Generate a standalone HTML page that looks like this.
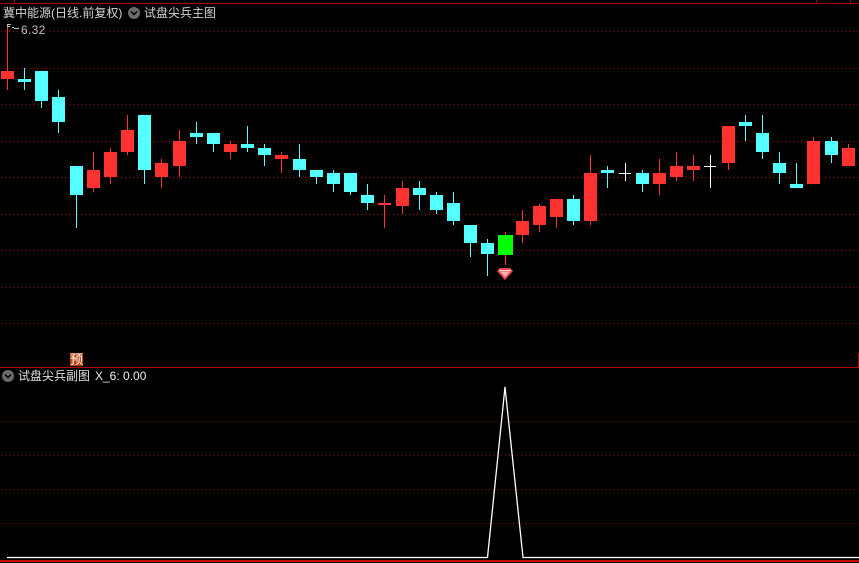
<!DOCTYPE html>
<html><head><meta charset="utf-8"><style>
html,body{margin:0;padding:0;background:#000;width:859px;height:563px;overflow:hidden}
.t{position:absolute;font:12px/14px "WenQuanYi Zen Hei","Liberation Sans","Noto Sans CJK SC",sans-serif;color:#d4d4d4;white-space:pre}
svg{position:absolute;left:0;top:0}
</style></head><body>
<svg width="859" height="563" viewBox="0 0 859 563">
<g shape-rendering="crispEdges">
<g stroke="#980000" stroke-width="1" stroke-dasharray="1 3">
<path d="M1 31.5H859M1 68.5H859M1 104.5H859M1 141.5H859M1 177.5H859M1 214.5H859M1 250.5H859M1 287.5H859M1 323.5H859"/>
</g>
<g stroke="#780000" stroke-width="1" stroke-dasharray="1 3">
<path d="M1 421.5H859M1 455.5H859M1 489.5H859M1 523.5H859"/>
</g>
<path fill="#b00000" d="M0 3h859v1H0zM14 0h1v3h-1zM816 0h1v3h-1zM850 0h1v3h-1zM0 367h859v1H0zM858 353h1v14h-1z"/>
<path fill="#c80000" d="M0 560h859v2H0z"/>
<path fill="#ff3232" d="M1 71H14V79H1zM7 27h1V90H7zM87 170H100V188H87zM93 152h1V192H93zM104 152H117V177H104zM110 148h1V184H110zM121 130H134V152H121zM127 115h1V155H127zM155 163H168V177H155zM161 159h1V188H161zM173 141H186V166H173zM179 130h1V177H179zM224 144H237V152H224zM230 141h1V159H230zM275 155H288V159H275zM281 152h1V173H281zM378 203H391V205H378zM384 195h1V228H384zM396 188H409V206H396zM402 181h1V214H402zM516 221H529V235H516zM522 210h1V243H522zM533 206H546V225H533zM539 204h1V232H539zM550 199H563V217H550zM556 199h1V228H556zM584 173H597V221H584zM590 155h1V225H590zM653 173H666V184H653zM659 159h1V195H659zM670 166H683V177H670zM676 152h1V181H676zM687 166H700V170H687zM693 155h1V181H693zM722 126H735V163H722zM728 126h1V170H728zM807 141H820V184H807zM813 137h1V184H813zM842 148H855V166H842zM848 144h1V166H848z"/>
<path fill="#54ffff" d="M18 79H31V82H18zM24 68h1V90H24zM35 71H48V101H35zM41 71h1V108H41zM52 97H65V122H52zM58 90h1V133H58zM70 166H83V195H70zM76 166h1V228H76zM138 115H151V170H138zM144 115h1V184H144zM190 133H203V137H190zM196 122h1V144H196zM207 133H220V144H207zM213 133h1V152H213zM241 144H254V148H241zM247 126h1V152H247zM258 148H271V155H258zM264 144h1V166H264zM293 159H306V170H293zM299 144h1V177H299zM310 170H323V177H310zM316 170h1V184H316zM327 173H340V184H327zM333 170h1V192H333zM344 173H357V192H344zM350 173h1V195H350zM361 195H374V203H361zM367 184h1V210H367zM413 188H426V195H413zM419 181h1V210H419zM430 195H443V210H430zM436 192h1V214H436zM447 203H460V221H447zM453 192h1V225H453zM464 225H477V243H464zM470 225h1V257H470zM481 243H494V254H481zM487 239h1V276H487zM567 199H580V221H567zM573 195h1V225H573zM601 170H614V173H601zM607 166h1V188H607zM636 173H649V184H636zM642 170h1V192H642zM739 122H752V126H739zM745 115h1V141H745zM756 133H769V152H756zM762 115h1V159H762zM773 163H786V173H773zM779 152h1V184H779zM790 184H803V188H790zM796 163h1V184H796zM825 141H838V155H825zM831 137h1V163H831z"/>
<path fill="#00ff00" d="M498 235H513V255H498z"/>
<path fill="#ff3232" d="M505 232h1V235H505zM505 255h1V265H505z"/>
<path fill="#ffffff" d="M619 173H631V174H619zM625 163h1V181H625zM704 166H716V167H704zM710 155h1V188H710z"/>
<path fill="#c0c0c0" d="M7 24h1v3H7zM8 24h3v1H8zM8 26h2v1H8zM12 27h2v1h-2zM14 28h2v1h-2zM16 28h3v1h-3z"/>
</g>
<path d="M7 557.500H487.500L505 387L523 557.500H859" fill="none" stroke="#fff" stroke-width="1.300"/>
<path d="M497 271l3-3h10l3 3-8 9z" fill="#f04650"/>
<path d="M500 271.500h10l-5 5.500z" fill="#ffb4b4"/>
<path d="M499 270.500h12" stroke="#ffd8d8" stroke-width="1"/>
<circle cx="134" cy="13" r="6" fill="#6a6a6a"/>
<path d="M131 11.500l3 3 3-3" fill="none" stroke="#000" stroke-width="1.500"/>
<circle cx="8" cy="376" r="6" fill="#6a6a6a"/>
<path d="M5 374.500l3 3 3-3" fill="none" stroke="#000" stroke-width="1.500"/>
</svg>
<div class="t" style="left:3px;top:6px">冀中能源(日线.前复权)</div>
<div class="t" style="left:144px;top:6px">试盘尖兵主图</div>
<div class="t" style="left:21px;top:23px;letter-spacing:.3px;color:#c0c0c0">6.32</div>
<div class="t" style="left:18px;top:369px;color:#e0e0e0">试盘尖兵副图</div>
<div class="t" style="left:95px;top:369px;color:#ececec">X_6: 0.00</div>
<div class="t" style="left:70px;top:353px;width:13px;height:13px;background:#b8460e;color:#fff;font-size:13px;line-height:13px;text-align:center;overflow:hidden">预</div>
</body></html>
